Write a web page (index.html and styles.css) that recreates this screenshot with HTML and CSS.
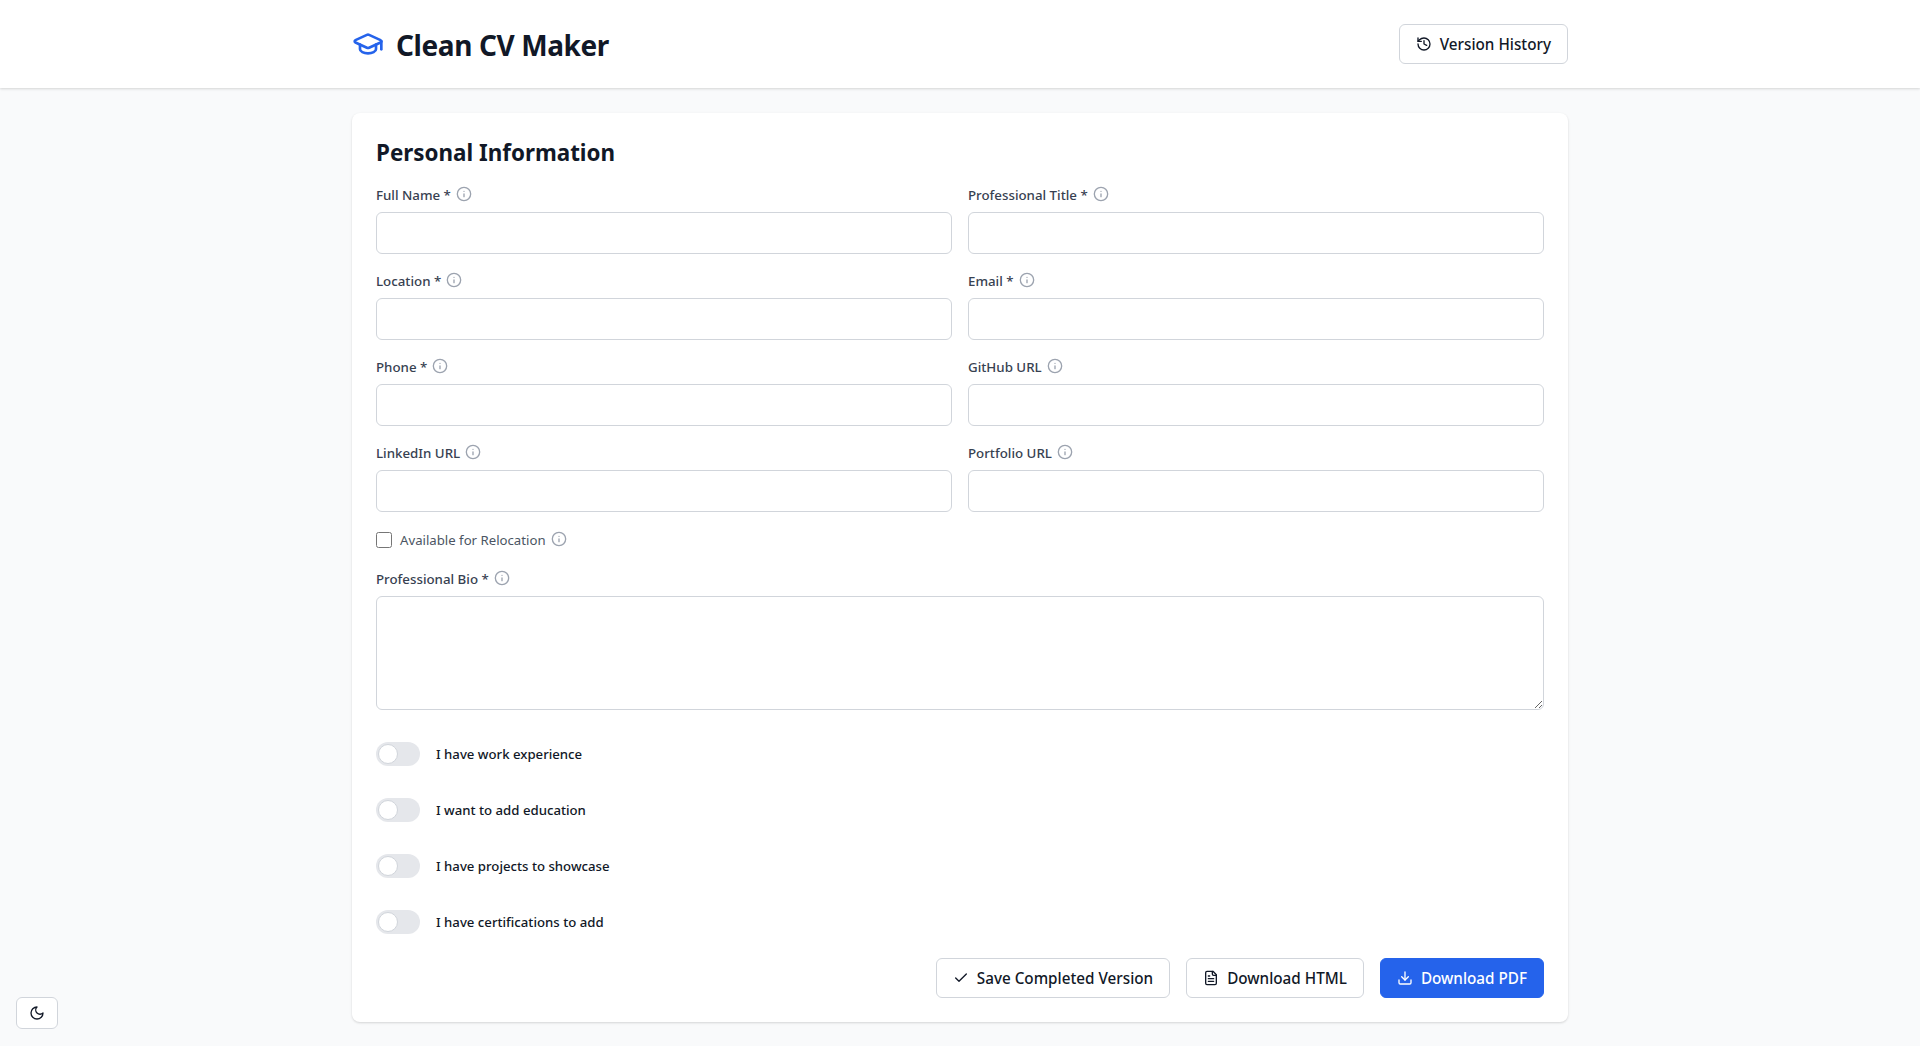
FILE: index.html
```html
<!DOCTYPE html>
<html lang="en">
<head>
<meta charset="utf-8">
<title>Clean CV Maker</title>
<link rel="stylesheet" href="styles.css">
</head>
<body>
<svg class="sprite" width="0" height="0" aria-hidden="true">
  <symbol id="info" viewBox="0 0 24 24"><circle cx="12" cy="12" r="10"/><path d="M12 16v-4"/><path d="M12 8h.01"/></symbol>
</svg>
<header class="topbar">
  <div class="topbar-inner">
    <div class="brand">
      <svg class="brand-icon" viewBox="0 0 24 24"><path d="M21.42 10.922a1 1 0 0 0-.019-1.838L12.83 5.18a2 2 0 0 0-1.66 0L2.6 9.08a1 1 0 0 0 0 1.832l8.57 3.908a2 2 0 0 0 1.66 0z"/><path d="M22 10v6"/><path d="M6 12.5V16a6 3 0 0 0 12 0v-3.5"/></svg>
      <h1 class="brand-name">Clean CV Maker</h1>
    </div>
    <button class="btn btn-history" type="button">
      <svg class="btn-icon" viewBox="0 0 24 24"><path d="M3 12a9 9 0 1 0 9-9 9.75 9.75 0 0 0-6.74 2.74L3 8"/><path d="M3 3v5h5"/><path d="M12 7v5l4 2"/></svg>
      Version History
    </button>
  </div>
</header>
<main class="page">
  <section class="card">
    <h2 class="card-title">Personal Information</h2>
    <div class="grid">
      <div class="field"><label class="label">Full Name *<svg class="info"><use href="#info"/></svg></label><input class="input" type="text"></div>
      <div class="field"><label class="label">Professional Title *<svg class="info"><use href="#info"/></svg></label><input class="input" type="text"></div>
      <div class="field"><label class="label">Location *<svg class="info"><use href="#info"/></svg></label><input class="input" type="text"></div>
      <div class="field"><label class="label">Email *<svg class="info"><use href="#info"/></svg></label><input class="input" type="text"></div>
      <div class="field"><label class="label">Phone *<svg class="info"><use href="#info"/></svg></label><input class="input" type="text"></div>
      <div class="field"><label class="label">GitHub URL<svg class="info"><use href="#info"/></svg></label><input class="input" type="text"></div>
      <div class="field"><label class="label">LinkedIn URL<svg class="info"><use href="#info"/></svg></label><input class="input" type="text"></div>
      <div class="field"><label class="label">Portfolio URL<svg class="info"><use href="#info"/></svg></label><input class="input" type="text"></div>
    </div>
    <label class="check-row"><input class="checkbox" type="checkbox"><span class="check-text">Available for Relocation</span><svg class="info"><use href="#info"/></svg></label>
    <div class="field bio"><label class="label">Professional Bio *<svg class="info"><use href="#info"/></svg></label><textarea class="textarea"></textarea></div>
    <div class="toggles">
      <div class="toggle-row"><span class="switch"><span class="knob"></span></span><span class="toggle-text">I have work experience</span></div>
      <div class="toggle-row"><span class="switch"><span class="knob"></span></span><span class="toggle-text">I want to add education</span></div>
      <div class="toggle-row"><span class="switch"><span class="knob"></span></span><span class="toggle-text">I have projects to showcase</span></div>
      <div class="toggle-row"><span class="switch"><span class="knob"></span></span><span class="toggle-text">I have certifications to add</span></div>
    </div>
    <div class="actions">
      <button class="btn" type="button"><svg class="btn-icon" viewBox="0 0 24 24"><path d="M20 6 9 17l-5-5"/></svg>Save Completed Version</button>
      <button class="btn" type="button"><svg class="btn-icon" viewBox="0 0 24 24"><path d="M15 2H6a2 2 0 0 0-2 2v16a2 2 0 0 0 2 2h12a2 2 0 0 0 2-2V7Z"/><path d="M14 2v4a2 2 0 0 0 2 2h4"/><path d="M10 9H8"/><path d="M16 13H8"/><path d="M16 17H8"/></svg>Download HTML</button>
      <button class="btn btn-primary" type="button"><svg class="btn-icon" viewBox="0 0 24 24"><path d="M21 15v4a2 2 0 0 1-2 2H5a2 2 0 0 1-2-2v-4"/><path d="m7 10 5 5 5-5"/><path d="M12 15V3"/></svg>Download PDF</button>
    </div>
  </section>
</main>
<button class="theme-btn" type="button" aria-label="Toggle theme"><svg class="btn-icon" viewBox="0 0 24 24"><path d="M12 3a6 6 0 0 0 9 9 9 9 0 1 1-9-9Z"/></svg></button>
</body>
</html>
```
FILE: styles.css
```css
* { box-sizing: border-box; }
html, body { margin: 0; height: 100%; }
body {
  background: #f9fafb;
  color: #111827;
  font-family: "Noto Sans", sans-serif;
  overflow: hidden;
}
.sprite { position: absolute; }
.topbar {
  height: 88px;
  background: #fff;
  box-shadow: 0 1px 3px rgba(0,0,0,.1), 0 1px 2px rgba(0,0,0,.06);
}
.topbar-inner {
  width: 1216px;
  height: 100%;
  margin: 0 auto;
  display: flex;
  align-items: center;
  justify-content: space-between;
}
.brand { display: flex; align-items: center; gap: 12px; }
.brand-icon {
  width: 32px; height: 32px;
  fill: none; stroke: #2563eb; stroke-width: 2; stroke-linecap: round; stroke-linejoin: round;
}
.brand-name { margin: 2px 0 0; font-size: 28px; line-height: 36px; font-weight: 700; letter-spacing: -0.4px; color: #111827; }
.btn {
  display: inline-flex;
  align-items: center;
  height: 40px;
  padding: 0 16px;
  gap: 8px;
  font: 500 15.25px/24px "Noto Sans", sans-serif;
  color: #111827;
  background: #fff;
  border: 1px solid #d1d5db;
  border-radius: 6px;
}
.btn-icon {
  width: 16px; height: 16px;
  fill: none; stroke: currentColor; stroke-width: 2; stroke-linecap: round; stroke-linejoin: round;
  flex: none;
}
.btn-primary { background: #2563eb; border-color: #2563eb; color: #fff; }
.page { width: 1216px; margin: 25px auto 0; }
.card {
  background: #fff;
  border-radius: 8px;
  padding: 24px;
  box-shadow: 0 1px 3px rgba(0,0,0,.1), 0 1px 2px rgba(0,0,0,.06);
}
.card-title { margin: 0 0 15px; font-size: 22.4px; line-height: 32px; font-weight: 700; color: #111827; }
.grid { display: grid; grid-template-columns: 1fr 1fr; gap: 16px; }
.field { display: flex; flex-direction: column; gap: 6px; }
.label {
  display: flex; align-items: center; gap: 5px;
  height: 22px;
  font-size: 13.3px; line-height: 22px; font-weight: 500; color: #374151;
  white-space: pre;
}
.info {
  width: 16px; height: 16px;
  margin-top: -3px;
  fill: none; stroke: #9ca3af; stroke-width: 2; stroke-linecap: round; stroke-linejoin: round;
  flex: none;
}
.input, .textarea {
  display: block;
  width: 100%;
  background: #fff;
  border: 1px solid #d1d5db;
  border-radius: 6px;
  outline: none;
}
.input { height: 42px; }
.textarea { height: 114px; }
.check-row { display: flex; align-items: center; margin-top: 16px; height: 24px; }
.checkbox { width: 16px; height: 16px; margin: 0 8px 0 0; }
.check-text { font-size: 13.2px; color: #4b5563; margin-right: 5px; }
.bio { margin-top: 16px; }
.toggles { display: flex; flex-direction: column; gap: 32px; margin-top: 32px; }
.toggle-row { display: flex; align-items: center; gap: 16px; height: 24px; }
.switch { width: 44px; height: 24px; border-radius: 12px; background: #e5e7eb; padding: 2px; display: block; }
.knob { display: block; width: 20px; height: 20px; border-radius: 50%; background: #fff; border: 1px solid #d1d5db; }
.toggle-text { font-size: 13.2px; line-height: 20px; font-weight: 500; color: #111827; }
.actions { display: flex; justify-content: flex-end; gap: 16px; margin-top: 24px; }
.theme-btn {
  position: fixed; left: 16px; bottom: 17px;
  width: 42px; height: 32px;
  display: flex; align-items: center; justify-content: center;
  background: #fff; color: #111827;
  border: 1px solid #d1d5db; border-radius: 6px;
  padding: 0;
}
```
